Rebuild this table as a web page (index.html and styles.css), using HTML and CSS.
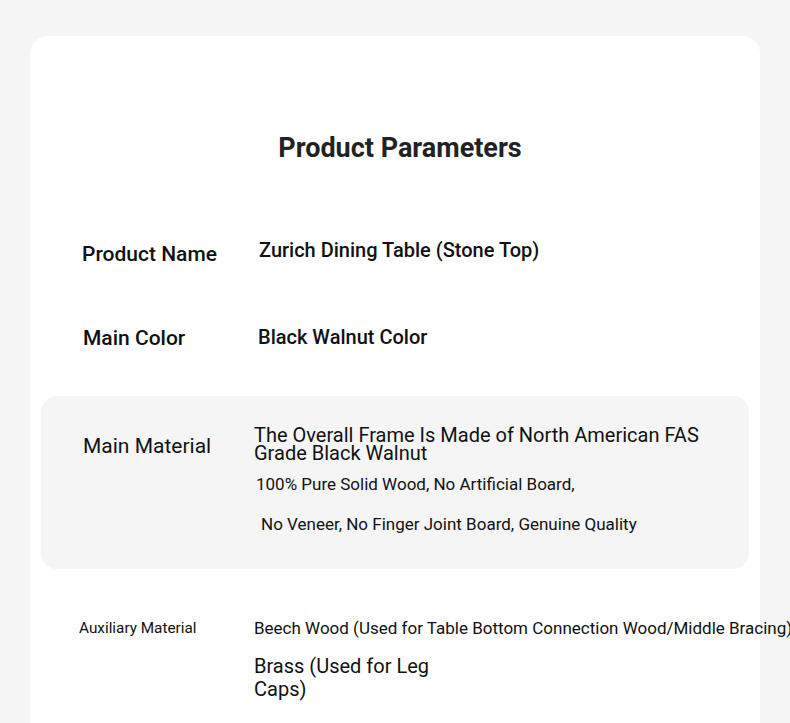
FILE: index.html
```html
<!DOCTYPE html>
<html lang="en">
<head>
<meta charset="utf-8">
<title>Product Parameters</title>
<link rel="stylesheet" href="styles.css">
</head>
<body>
<main class="card">
  <h1 class="title">Product Parameters</h1>
  <div class="row row-name">
    <div class="label">Product Name</div>
    <div class="value">Zurich Dining Table (Stone Top)</div>
  </div>
  <div class="row row-color">
    <div class="label">Main Color</div>
    <div class="value">Black Walnut Color</div>
  </div>
  <div class="row row-material">
    <div class="label label-reg">Main Material</div>
    <div class="value value-stack">
      <p class="txt big">The Overall Frame Is Made of North American FAS<br>Grade Black Walnut</p>
      <p class="txt mid line-a">100% Pure Solid Wood, No Artificial Board,</p>
      <p class="txt mid line-b">No Veneer, No Finger Joint Board, Genuine Quality</p>
    </div>
  </div>
  <div class="row row-aux">
    <div class="label label-small">Auxiliary Material</div>
    <div class="value value-stack">
      <p class="txt mid beech">Beech Wood (Used for Table Bottom Connection Wood/Middle Bracing)</p>
      <p class="txt brass">Brass (Used for Leg<br>Caps)</p>
    </div>
  </div>
</main>
</body>
</html>
```

FILE: styles.css
```css
html, body {
  margin: 0;
  padding: 0;
}
body {
  background: #f5f5f5;
  font-family: Roboto, "Liberation Sans", sans-serif;
  color: #111;
  padding: 36px 30px 0;
  height: 723px;
  box-sizing: border-box;
  overflow: hidden;
}
.card {
  background: #fff;
  border-radius: 18px 18px 0 0;
  padding: 94px 11px 40px;
  min-height: 800px;
}
.title {
  margin: 0;
  padding-left: 10px;
  text-align: center;
  font-size: 27px;
  font-weight: 700;
  color: #222;
  line-height: 36px;
}
.row {
  display: flex;
  align-items: flex-start;
}
.label {
  width: 207px;
  flex: none;
  box-sizing: border-box;
  padding-left: 41px;
  font-size: 21px;
  font-weight: 500;
}
.value {
  font-size: 20px;
  font-weight: 500;
}
.row-name {
  margin-top: 70px;
}
.row-name .label { line-height: 28px; padding-top: 4px; }
.row-name .value { line-height: 28px; padding-left: 11px; }
.row-color {
  margin-top: 55px;
}
.row-color .label { line-height: 28px; padding-left: 42px; padding-top: 1px; }
.row-color .value { line-height: 28px; padding-left: 10px; }
.row-material {
  margin-top: 44px;
  background: #f5f5f5;
  border-radius: 16px;
  height: 173px;
  box-sizing: border-box;
  padding-top: 30px;
}
.value-stack p {
  margin: 0;
}
.txt {
  white-space: nowrap;
  font-weight: 400;
}
.label-reg {
  font-weight: 400;
  font-size: 21px;
  line-height: 24px;
  padding-top: 8px;
  padding-left: 42px;
}
.big {
  font-size: 20px;
  line-height: 18px;
}
.mid {
  font-size: 17px;
  line-height: 20px;
}
.row-material .value { padding-left: 6px; }
.value-stack .line-a { margin-top: 12px; padding-left: 2px; }
.value-stack .line-b { margin-top: 20px; padding-left: 7px; }
.row-aux {
  margin-top: 46px;
}
.label-small {
  font-weight: 400;
  font-size: 15.3px;
  line-height: 20px;
  padding-left: 38px;
  padding-top: 3px;
}
.row-aux .value { padding-left: 6px; }
.beech { line-height: 26px; }
.value-stack .brass {
  margin-top: 14px;
  font-size: 20px;
  line-height: 23px;
}
```
